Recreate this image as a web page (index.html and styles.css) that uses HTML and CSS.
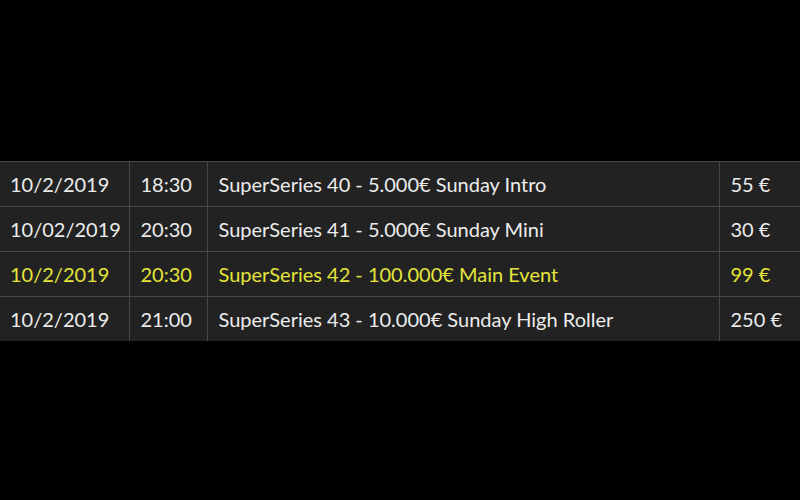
FILE: index.html
```html
<!DOCTYPE html>
<html>
<head>
<meta charset="utf-8">
<link rel="stylesheet" href="styles.css">
</head>
<body>
<table class="schedule">
  <colgroup>
    <col class="c-date"><col class="c-time"><col class="c-name"><col class="c-price">
  </colgroup>
  <tbody>
    <tr><td>10/2/2019</td><td>18:30</td><td>SuperSeries 40 - 5.000€ Sunday Intro</td><td>55 €</td></tr>
    <tr><td>10/02/2019</td><td>20:30</td><td>SuperSeries 41 - 5.000€ Sunday Mini</td><td>30 €</td></tr>
    <tr class="highlight"><td>10/2/2019</td><td>20:30</td><td>SuperSeries 42 - 100.000€ Main Event</td><td>99 €</td></tr>
    <tr><td>10/2/2019</td><td>21:00</td><td>SuperSeries 43 - 10.000€ Sunday High Roller</td><td>250 €</td></tr>
  </tbody>
</table>
</body>
</html>
```
FILE: styles.css
```css
html, body {
  margin: 0;
  padding: 0;
  background: #000;
  height: 100%;
}
.schedule {
  margin-top: 161px;
  width: 800px;
  border-collapse: collapse;
  table-layout: fixed;
  background: #222222;
  font-family: "Lato", "Noto Sans", sans-serif;
  font-size: 20px;
  color: #ececec;
}
.c-date { width: 129px; }
.c-time { width: 78px; }
.c-name { width: 512px; }
.c-price { width: 81px; }
.schedule td {
  height: 44px;
  padding: 0 0 0 11px;
  border: 1px solid #474747;
  white-space: nowrap;
  vertical-align: middle;
}
.schedule td:first-child { border-left: none; padding-left: 10px; }
.schedule td:last-child { border-right: none; }
.schedule tr:last-child td { border-bottom: none; }
.schedule .highlight td { color: #e4e43a; }
```
